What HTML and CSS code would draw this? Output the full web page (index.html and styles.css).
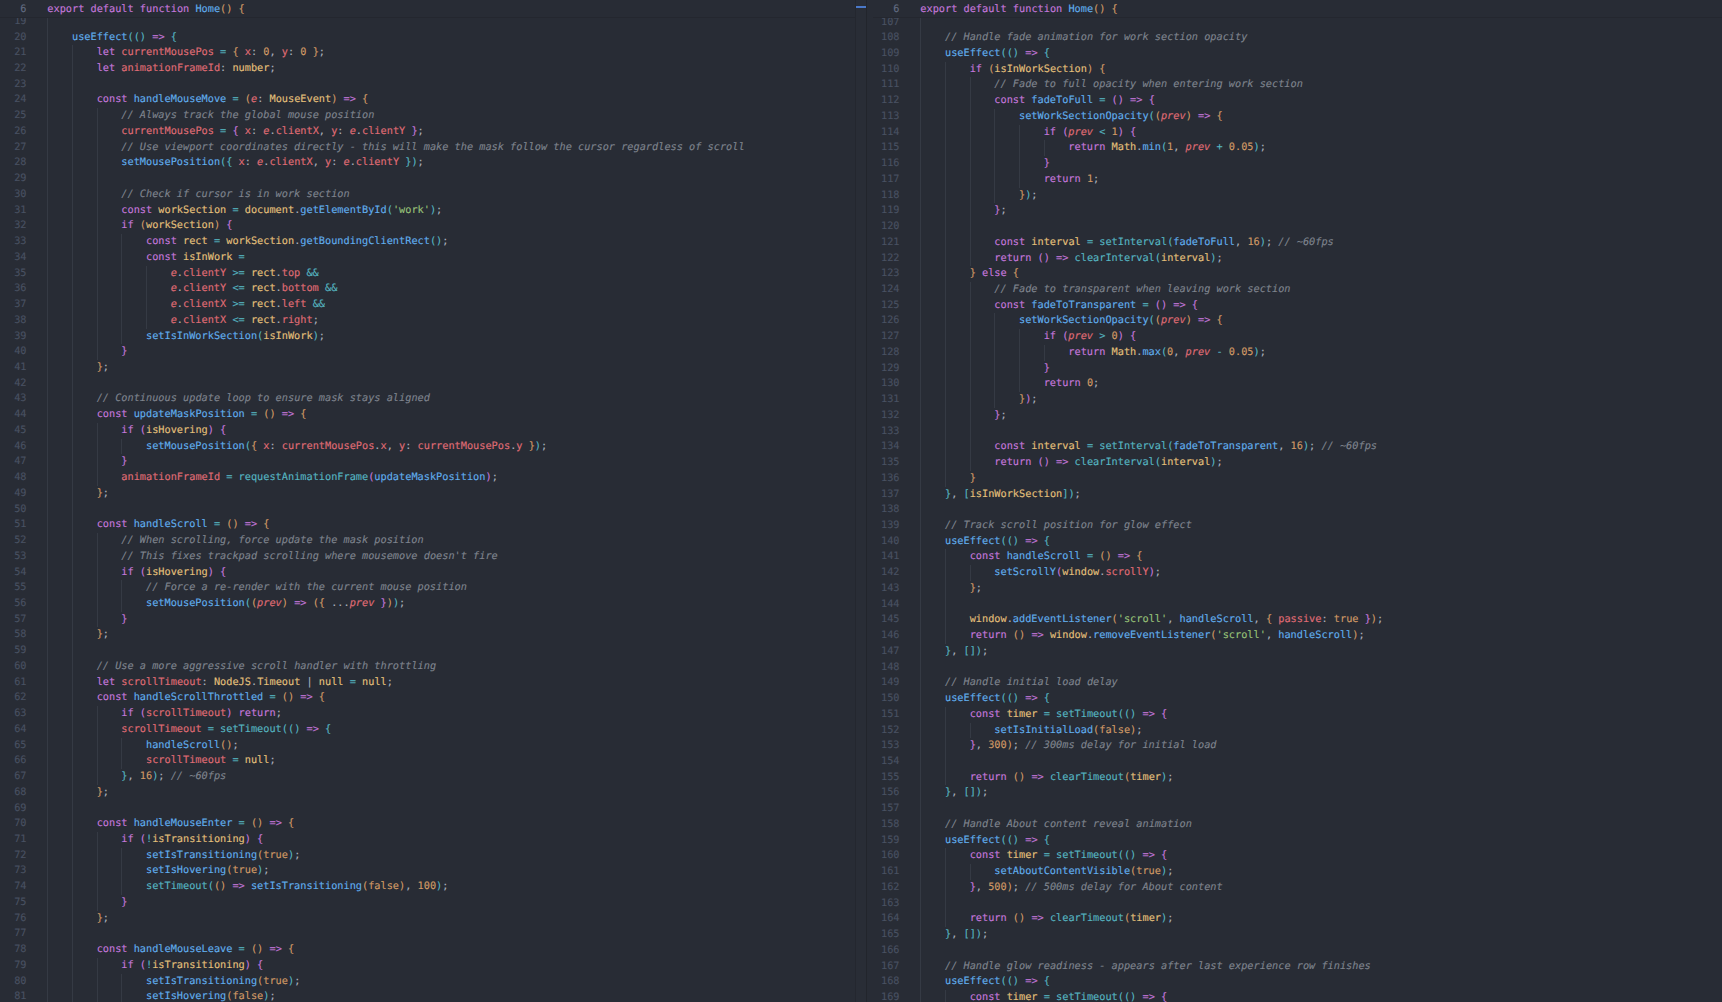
FILE: index.html
```html
<!DOCTYPE html>
<html lang="en">
<head>
<meta charset="utf-8">
<title>page.tsx</title>
<link rel="stylesheet" href="styles.css">
</head>
<body>
<main class="editor">
<section class="pane">
<div class="sticky"><div class="l"><span class="n on">6</span><span class="t"><span class="k">export default function</span> <span class="f">Home</span><span class="O">()</span> <span class="O">{</span></span></div></div>
<div class="scroll"><div class="code left">
<div class="l"><span class="n">19</span><i></i></div>
<div class="l"><span class="n">20</span><i></i><span class="t">    <span class="f">useEffect</span><span class="T">(()</span> <span class="k">=&gt;</span> <span class="T">{</span></span></div>
<div class="l"><span class="n">21</span><i></i><i></i><span class="t">    <span class="k">let</span> <span class="v">currentMousePos</span> <span class="o">=</span> <span class="O">{</span> <span class="v">x</span>: <span class="d">0</span>, <span class="v">y</span>: <span class="d">0</span> <span class="O">}</span>;</span></div>
<div class="l"><span class="n">22</span><i></i><i></i><span class="t">    <span class="k">let</span> <span class="v">animationFrameId</span>: <span class="y">number</span>;</span></div>
<div class="l"><span class="n">23</span><i></i><i></i></div>
<div class="l"><span class="n">24</span><i></i><i></i><span class="t">    <span class="k">const</span> <span class="f">handleMouseMove</span> <span class="o">=</span> <span class="O">(</span><span class="a">e</span>: <span class="y">MouseEvent</span><span class="O">)</span> <span class="k">=&gt;</span> <span class="O">{</span></span></div>
<div class="l"><span class="n">25</span><i></i><i></i><i></i><span class="t">    <span class="c">// Always track the global mouse position</span></span></div>
<div class="l"><span class="n">26</span><i></i><i></i><i></i><span class="t">    <span class="v">currentMousePos</span> <span class="o">=</span> <span class="P">{</span> <span class="v">x</span>: <span class="a">e</span>.<span class="v">clientX</span>, <span class="v">y</span>: <span class="a">e</span>.<span class="v">clientY</span> <span class="P">}</span>;</span></div>
<div class="l"><span class="n">27</span><i></i><i></i><i></i><span class="t">    <span class="c">// Use viewport coordinates directly - this will make the mask follow the cursor regardless of scroll</span></span></div>
<div class="l"><span class="n">28</span><i></i><i></i><i></i><span class="t">    <span class="f">setMousePosition</span><span class="T">({</span> <span class="v">x</span>: <span class="a">e</span>.<span class="v">clientX</span>, <span class="v">y</span>: <span class="a">e</span>.<span class="v">clientY</span> <span class="T">})</span>;</span></div>
<div class="l"><span class="n">29</span><i></i><i></i><i></i></div>
<div class="l"><span class="n">30</span><i></i><i></i><i></i><span class="t">    <span class="c">// Check if cursor is in work section</span></span></div>
<div class="l"><span class="n">31</span><i></i><i></i><i></i><span class="t">    <span class="k">const</span> <span class="y">workSection</span> <span class="o">=</span> <span class="y">document</span>.<span class="f">getElementById</span><span class="T">(</span><span class="s">'work'</span><span class="T">)</span>;</span></div>
<div class="l"><span class="n">32</span><i></i><i></i><i></i><span class="t">    <span class="k">if</span> <span class="O">(</span><span class="y">workSection</span><span class="O">)</span> <span class="P">{</span></span></div>
<div class="l"><span class="n">33</span><i></i><i></i><i></i><i></i><span class="t">    <span class="k">const</span> <span class="y">rect</span> <span class="o">=</span> <span class="y">workSection</span>.<span class="f">getBoundingClientRect</span><span class="T">()</span>;</span></div>
<div class="l"><span class="n">34</span><i></i><i></i><i></i><i></i><span class="t">    <span class="k">const</span> <span class="y">isInWork</span> <span class="o">=</span></span></div>
<div class="l"><span class="n">35</span><i></i><i></i><i></i><i></i><i></i><span class="t">    <span class="a">e</span>.<span class="v">clientY</span> <span class="o">&gt;=</span> <span class="y">rect</span>.<span class="v">top</span> <span class="o">&amp;&amp;</span></span></div>
<div class="l"><span class="n">36</span><i></i><i></i><i></i><i></i><i></i><span class="t">    <span class="a">e</span>.<span class="v">clientY</span> <span class="o">&lt;=</span> <span class="y">rect</span>.<span class="v">bottom</span> <span class="o">&amp;&amp;</span></span></div>
<div class="l"><span class="n">37</span><i></i><i></i><i></i><i></i><i></i><span class="t">    <span class="a">e</span>.<span class="v">clientX</span> <span class="o">&gt;=</span> <span class="y">rect</span>.<span class="v">left</span> <span class="o">&amp;&amp;</span></span></div>
<div class="l"><span class="n">38</span><i></i><i></i><i></i><i></i><i></i><span class="t">    <span class="a">e</span>.<span class="v">clientX</span> <span class="o">&lt;=</span> <span class="y">rect</span>.<span class="v">right</span>;</span></div>
<div class="l"><span class="n">39</span><i></i><i></i><i></i><i></i><span class="t">    <span class="f">setIsInWorkSection</span><span class="T">(</span><span class="y">isInWork</span><span class="T">)</span>;</span></div>
<div class="l"><span class="n">40</span><i></i><i></i><i></i><span class="t">    <span class="P">}</span></span></div>
<div class="l"><span class="n">41</span><i></i><i></i><span class="t">    <span class="O">}</span>;</span></div>
<div class="l"><span class="n">42</span><i></i><i></i></div>
<div class="l"><span class="n">43</span><i></i><i></i><span class="t">    <span class="c">// Continuous update loop to ensure mask stays aligned</span></span></div>
<div class="l"><span class="n">44</span><i></i><i></i><span class="t">    <span class="k">const</span> <span class="f">updateMaskPosition</span> <span class="o">=</span> <span class="O">()</span> <span class="k">=&gt;</span> <span class="O">{</span></span></div>
<div class="l"><span class="n">45</span><i></i><i></i><i></i><span class="t">    <span class="k">if</span> <span class="P">(</span><span class="y">isHovering</span><span class="P">)</span> <span class="P">{</span></span></div>
<div class="l"><span class="n">46</span><i></i><i></i><i></i><i></i><span class="t">    <span class="f">setMousePosition</span><span class="T">(</span><span class="O">{</span> <span class="v">x</span>: <span class="v">currentMousePos</span>.<span class="v">x</span>, <span class="v">y</span>: <span class="v">currentMousePos</span>.<span class="v">y</span> <span class="O">}</span><span class="T">)</span>;</span></div>
<div class="l"><span class="n">47</span><i></i><i></i><i></i><span class="t">    <span class="P">}</span></span></div>
<div class="l"><span class="n">48</span><i></i><i></i><i></i><span class="t">    <span class="v">animationFrameId</span> <span class="o">=</span> <span class="h">requestAnimationFrame</span><span class="P">(</span><span class="f">updateMaskPosition</span><span class="P">)</span>;</span></div>
<div class="l"><span class="n">49</span><i></i><i></i><span class="t">    <span class="O">}</span>;</span></div>
<div class="l"><span class="n">50</span><i></i><i></i></div>
<div class="l"><span class="n">51</span><i></i><i></i><span class="t">    <span class="k">const</span> <span class="f">handleScroll</span> <span class="o">=</span> <span class="O">()</span> <span class="k">=&gt;</span> <span class="O">{</span></span></div>
<div class="l"><span class="n">52</span><i></i><i></i><i></i><span class="t">    <span class="c">// When scrolling, force update the mask position</span></span></div>
<div class="l"><span class="n">53</span><i></i><i></i><i></i><span class="t">    <span class="c">// This fixes trackpad scrolling where mousemove doesn't fire</span></span></div>
<div class="l"><span class="n">54</span><i></i><i></i><i></i><span class="t">    <span class="k">if</span> <span class="P">(</span><span class="y">isHovering</span><span class="P">)</span> <span class="P">{</span></span></div>
<div class="l"><span class="n">55</span><i></i><i></i><i></i><i></i><span class="t">    <span class="c">// Force a re-render with the current mouse position</span></span></div>
<div class="l"><span class="n">56</span><i></i><i></i><i></i><i></i><span class="t">    <span class="f">setMousePosition</span><span class="T">(</span><span class="O">(</span><span class="a">prev</span><span class="O">)</span> <span class="k">=&gt;</span> <span class="O">({</span> ...<span class="a">prev</span> <span class="P">}</span><span class="O">)</span><span class="T">)</span>;</span></div>
<div class="l"><span class="n">57</span><i></i><i></i><i></i><span class="t">    <span class="P">}</span></span></div>
<div class="l"><span class="n">58</span><i></i><i></i><span class="t">    <span class="O">}</span>;</span></div>
<div class="l"><span class="n">59</span><i></i><i></i></div>
<div class="l"><span class="n">60</span><i></i><i></i><span class="t">    <span class="c">// Use a more aggressive scroll handler with throttling</span></span></div>
<div class="l"><span class="n">61</span><i></i><i></i><span class="t">    <span class="k">let</span> <span class="v">scrollTimeout</span>: <span class="y">NodeJS</span>.<span class="y">Timeout</span> | <span class="y">null</span> <span class="o">=</span> <span class="y">null</span>;</span></div>
<div class="l"><span class="n">62</span><i></i><i></i><span class="t">    <span class="k">const</span> <span class="f">handleScrollThrottled</span> <span class="o">=</span> <span class="O">()</span> <span class="k">=&gt;</span> <span class="O">{</span></span></div>
<div class="l"><span class="n">63</span><i></i><i></i><i></i><span class="t">    <span class="k">if</span> <span class="P">(</span><span class="v">scrollTimeout</span><span class="P">)</span> <span class="k">return</span>;</span></div>
<div class="l"><span class="n">64</span><i></i><i></i><i></i><span class="t">    <span class="v">scrollTimeout</span> <span class="o">=</span> <span class="h">setTimeout</span><span class="T">(()</span> <span class="k">=&gt;</span> <span class="T">{</span></span></div>
<div class="l"><span class="n">65</span><i></i><i></i><i></i><i></i><span class="t">    <span class="f">handleScroll</span><span class="O">()</span>;</span></div>
<div class="l"><span class="n">66</span><i></i><i></i><i></i><i></i><span class="t">    <span class="v">scrollTimeout</span> <span class="o">=</span> <span class="y">null</span>;</span></div>
<div class="l"><span class="n">67</span><i></i><i></i><i></i><span class="t">    <span class="T">}</span>, <span class="d">16</span><span class="T">)</span>; <span class="c">// ~60fps</span></span></div>
<div class="l"><span class="n">68</span><i></i><i></i><span class="t">    <span class="O">}</span>;</span></div>
<div class="l"><span class="n">69</span><i></i><i></i></div>
<div class="l"><span class="n">70</span><i></i><i></i><span class="t">    <span class="k">const</span> <span class="f">handleMouseEnter</span> <span class="o">=</span> <span class="O">()</span> <span class="k">=&gt;</span> <span class="O">{</span></span></div>
<div class="l"><span class="n">71</span><i></i><i></i><i></i><span class="t">    <span class="k">if</span> <span class="P">(</span><span class="o">!</span><span class="y">isTransitioning</span><span class="P">)</span> <span class="P">{</span></span></div>
<div class="l"><span class="n">72</span><i></i><i></i><i></i><i></i><span class="t">    <span class="f">setIsTransitioning</span><span class="O">(</span><span class="d">true</span><span class="T">)</span>;</span></div>
<div class="l"><span class="n">73</span><i></i><i></i><i></i><i></i><span class="t">    <span class="f">setIsHovering</span><span class="O">(</span><span class="d">true</span><span class="T">)</span>;</span></div>
<div class="l"><span class="n">74</span><i></i><i></i><i></i><i></i><span class="t">    <span class="h">setTimeout</span><span class="T">(</span><span class="O">()</span> <span class="k">=&gt;</span> <span class="f">setIsTransitioning</span><span class="O">(</span><span class="d">false</span><span class="O">)</span>, <span class="d">100</span><span class="T">)</span>;</span></div>
<div class="l"><span class="n">75</span><i></i><i></i><i></i><span class="t">    <span class="P">}</span></span></div>
<div class="l"><span class="n">76</span><i></i><i></i><span class="t">    <span class="O">}</span>;</span></div>
<div class="l"><span class="n">77</span><i></i><i></i></div>
<div class="l"><span class="n">78</span><i></i><i></i><span class="t">    <span class="k">const</span> <span class="f">handleMouseLeave</span> <span class="o">=</span> <span class="O">()</span> <span class="k">=&gt;</span> <span class="O">{</span></span></div>
<div class="l"><span class="n">79</span><i></i><i></i><i></i><span class="t">    <span class="k">if</span> <span class="P">(</span><span class="o">!</span><span class="y">isTransitioning</span><span class="P">)</span> <span class="P">{</span></span></div>
<div class="l"><span class="n">80</span><i></i><i></i><i></i><i></i><span class="t">    <span class="f">setIsTransitioning</span><span class="O">(</span><span class="d">true</span><span class="T">)</span>;</span></div>
<div class="l"><span class="n">81</span><i></i><i></i><i></i><i></i><span class="t">    <span class="f">setIsHovering</span><span class="O">(</span><span class="d">false</span><span class="T">)</span>;</span></div>
</div></div>
</section>
<aside class="rail"><div class="mark"></div></aside>
<section class="pane second">
<div class="sticky"><div class="l"><span class="n on">6</span><span class="t"><span class="k">export default function</span> <span class="f">Home</span><span class="O">()</span> <span class="O">{</span></span></div></div>
<div class="scroll"><div class="code right">
<div class="l"><span class="n">107</span><i></i></div>
<div class="l"><span class="n">108</span><i></i><span class="t">    <span class="c">// Handle fade animation for work section opacity</span></span></div>
<div class="l"><span class="n">109</span><i></i><span class="t">    <span class="f">useEffect</span><span class="T">(()</span> <span class="k">=&gt;</span> <span class="T">{</span></span></div>
<div class="l"><span class="n">110</span><i></i><i></i><span class="t">    <span class="k">if</span> <span class="O">(</span><span class="y">isInWorkSection</span><span class="O">)</span> <span class="O">{</span></span></div>
<div class="l"><span class="n">111</span><i></i><i></i><i></i><span class="t">    <span class="c">// Fade to full opacity when entering work section</span></span></div>
<div class="l"><span class="n">112</span><i></i><i></i><i></i><span class="t">    <span class="k">const</span> <span class="f">fadeToFull</span> <span class="o">=</span> <span class="P">()</span> <span class="k">=&gt;</span> <span class="P">{</span></span></div>
<div class="l"><span class="n">113</span><i></i><i></i><i></i><i></i><span class="t">    <span class="f">setWorkSectionOpacity</span><span class="T">(</span><span class="O">(</span><span class="a">prev</span><span class="O">)</span> <span class="k">=&gt;</span> <span class="O">{</span></span></div>
<div class="l"><span class="n">114</span><i></i><i></i><i></i><i></i><i></i><span class="t">    <span class="k">if</span> <span class="P">(</span><span class="a">prev</span> <span class="o">&lt;</span> <span class="d">1</span><span class="P">)</span> <span class="P">{</span></span></div>
<div class="l"><span class="n">115</span><i></i><i></i><i></i><i></i><i></i><i></i><span class="t">    <span class="k">return</span> <span class="y">Math</span>.<span class="f">min</span><span class="T">(</span><span class="d">1</span>, <span class="a">prev</span> <span class="o">+</span> <span class="d">0.05</span><span class="T">)</span>;</span></div>
<div class="l"><span class="n">116</span><i></i><i></i><i></i><i></i><i></i><span class="t">    <span class="P">}</span></span></div>
<div class="l"><span class="n">117</span><i></i><i></i><i></i><i></i><i></i><span class="t">    <span class="k">return</span> <span class="d">1</span>;</span></div>
<div class="l"><span class="n">118</span><i></i><i></i><i></i><i></i><span class="t">    <span class="O">}</span><span class="T">)</span>;</span></div>
<div class="l"><span class="n">119</span><i></i><i></i><i></i><span class="t">    <span class="P">}</span>;</span></div>
<div class="l"><span class="n">120</span><i></i><i></i><i></i></div>
<div class="l"><span class="n">121</span><i></i><i></i><i></i><span class="t">    <span class="k">const</span> <span class="y">interval</span> <span class="o">=</span> <span class="h">setInterval</span><span class="T">(</span><span class="f">fadeToFull</span>, <span class="d">16</span><span class="T">)</span>; <span class="c">// ~60fps</span></span></div>
<div class="l"><span class="n">122</span><i></i><i></i><i></i><span class="t">    <span class="k">return</span> <span class="P">()</span> <span class="k">=&gt;</span> <span class="h">clearInterval</span><span class="T">(</span><span class="y">interval</span><span class="T">)</span>;</span></div>
<div class="l"><span class="n">123</span><i></i><i></i><span class="t">    <span class="O">}</span> <span class="k">else</span> <span class="O">{</span></span></div>
<div class="l"><span class="n">124</span><i></i><i></i><i></i><span class="t">    <span class="c">// Fade to transparent when leaving work section</span></span></div>
<div class="l"><span class="n">125</span><i></i><i></i><i></i><span class="t">    <span class="k">const</span> <span class="f">fadeToTransparent</span> <span class="o">=</span> <span class="P">()</span> <span class="k">=&gt;</span> <span class="P">{</span></span></div>
<div class="l"><span class="n">126</span><i></i><i></i><i></i><i></i><span class="t">    <span class="f">setWorkSectionOpacity</span><span class="T">(</span><span class="O">(</span><span class="a">prev</span><span class="O">)</span> <span class="k">=&gt;</span> <span class="O">{</span></span></div>
<div class="l"><span class="n">127</span><i></i><i></i><i></i><i></i><i></i><span class="t">    <span class="k">if</span> <span class="P">(</span><span class="a">prev</span> <span class="o">&gt;</span> <span class="d">0</span><span class="P">)</span> <span class="P">{</span></span></div>
<div class="l"><span class="n">128</span><i></i><i></i><i></i><i></i><i></i><i></i><span class="t">    <span class="k">return</span> <span class="y">Math</span>.<span class="f">max</span><span class="T">(</span><span class="d">0</span>, <span class="a">prev</span> <span class="o">-</span> <span class="d">0.05</span><span class="T">)</span>;</span></div>
<div class="l"><span class="n">129</span><i></i><i></i><i></i><i></i><i></i><span class="t">    <span class="P">}</span></span></div>
<div class="l"><span class="n">130</span><i></i><i></i><i></i><i></i><i></i><span class="t">    <span class="k">return</span> <span class="d">0</span>;</span></div>
<div class="l"><span class="n">131</span><i></i><i></i><i></i><i></i><span class="t">    <span class="O">}</span><span class="P">)</span>;</span></div>
<div class="l"><span class="n">132</span><i></i><i></i><i></i><span class="t">    <span class="P">}</span>;</span></div>
<div class="l"><span class="n">133</span><i></i><i></i><i></i></div>
<div class="l"><span class="n">134</span><i></i><i></i><i></i><span class="t">    <span class="k">const</span> <span class="y">interval</span> <span class="o">=</span> <span class="h">setInterval</span><span class="T">(</span><span class="f">fadeToTransparent</span>, <span class="d">16</span><span class="T">)</span>; <span class="c">// ~60fps</span></span></div>
<div class="l"><span class="n">135</span><i></i><i></i><i></i><span class="t">    <span class="k">return</span> <span class="P">()</span> <span class="k">=&gt;</span> <span class="h">clearInterval</span><span class="T">(</span><span class="y">interval</span><span class="T">)</span>;</span></div>
<div class="l"><span class="n">136</span><i></i><i></i><span class="t">    <span class="O">}</span></span></div>
<div class="l"><span class="n">137</span><i></i><span class="t">    <span class="T">}</span>, <span class="T">[</span><span class="y">isInWorkSection</span><span class="T">])</span>;</span></div>
<div class="l"><span class="n">138</span><i></i></div>
<div class="l"><span class="n">139</span><i></i><span class="t">    <span class="c">// Track scroll position for glow effect</span></span></div>
<div class="l"><span class="n">140</span><i></i><span class="t">    <span class="f">useEffect</span><span class="T">(()</span> <span class="k">=&gt;</span> <span class="T">{</span></span></div>
<div class="l"><span class="n">141</span><i></i><i></i><span class="t">    <span class="k">const</span> <span class="f">handleScroll</span> <span class="o">=</span> <span class="O">()</span> <span class="k">=&gt;</span> <span class="O">{</span></span></div>
<div class="l"><span class="n">142</span><i></i><i></i><i></i><span class="t">    <span class="f">setScrollY</span><span class="P">(</span><span class="y">window</span>.<span class="v">scrollY</span><span class="P">)</span>;</span></div>
<div class="l"><span class="n">143</span><i></i><i></i><span class="t">    <span class="O">}</span>;</span></div>
<div class="l"><span class="n">144</span><i></i><i></i></div>
<div class="l"><span class="n">145</span><i></i><i></i><span class="t">    <span class="y">window</span>.<span class="f">addEventListener</span><span class="O">(</span><span class="s">'scroll'</span>, <span class="f">handleScroll</span>, <span class="O">{</span> <span class="v">passive</span>: <span class="d">true</span> <span class="P">}</span><span class="O">)</span>;</span></div>
<div class="l"><span class="n">146</span><i></i><i></i><span class="t">    <span class="k">return</span> <span class="O">()</span> <span class="k">=&gt;</span> <span class="y">window</span>.<span class="f">removeEventListener</span><span class="O">(</span><span class="s">'scroll'</span>, <span class="f">handleScroll</span><span class="O">)</span>;</span></div>
<div class="l"><span class="n">147</span><i></i><span class="t">    <span class="T">}</span>, <span class="T">[])</span>;</span></div>
<div class="l"><span class="n">148</span><i></i></div>
<div class="l"><span class="n">149</span><i></i><span class="t">    <span class="c">// Handle initial load delay</span></span></div>
<div class="l"><span class="n">150</span><i></i><span class="t">    <span class="f">useEffect</span><span class="T">(()</span> <span class="k">=&gt;</span> <span class="T">{</span></span></div>
<div class="l"><span class="n">151</span><i></i><i></i><span class="t">    <span class="k">const</span> <span class="y">timer</span> <span class="o">=</span> <span class="h">setTimeout</span><span class="T">(()</span> <span class="k">=&gt;</span> <span class="P">{</span></span></div>
<div class="l"><span class="n">152</span><i></i><i></i><i></i><span class="t">    <span class="f">setIsInitialLoad</span><span class="O">(</span><span class="d">false</span><span class="O">)</span>;</span></div>
<div class="l"><span class="n">153</span><i></i><i></i><span class="t">    <span class="P">}</span>, <span class="d">300</span><span class="O">)</span>; <span class="c">// 300ms delay for initial load</span></span></div>
<div class="l"><span class="n">154</span><i></i><i></i></div>
<div class="l"><span class="n">155</span><i></i><i></i><span class="t">    <span class="k">return</span> <span class="O">()</span> <span class="k">=&gt;</span> <span class="h">clearTimeout</span><span class="O">(</span><span class="y">timer</span><span class="T">)</span>;</span></div>
<div class="l"><span class="n">156</span><i></i><span class="t">    <span class="T">}</span>, <span class="T">[])</span>;</span></div>
<div class="l"><span class="n">157</span><i></i></div>
<div class="l"><span class="n">158</span><i></i><span class="t">    <span class="c">// Handle About content reveal animation</span></span></div>
<div class="l"><span class="n">159</span><i></i><span class="t">    <span class="f">useEffect</span><span class="T">(()</span> <span class="k">=&gt;</span> <span class="T">{</span></span></div>
<div class="l"><span class="n">160</span><i></i><i></i><span class="t">    <span class="k">const</span> <span class="y">timer</span> <span class="o">=</span> <span class="h">setTimeout</span><span class="T">(()</span> <span class="k">=&gt;</span> <span class="P">{</span></span></div>
<div class="l"><span class="n">161</span><i></i><i></i><i></i><span class="t">    <span class="f">setAboutContentVisible</span><span class="O">(</span><span class="d">true</span><span class="T">)</span>;</span></div>
<div class="l"><span class="n">162</span><i></i><i></i><span class="t">    <span class="P">}</span>, <span class="d">500</span><span class="O">)</span>; <span class="c">// 500ms delay for About content</span></span></div>
<div class="l"><span class="n">163</span><i></i><i></i></div>
<div class="l"><span class="n">164</span><i></i><i></i><span class="t">    <span class="k">return</span> <span class="O">()</span> <span class="k">=&gt;</span> <span class="h">clearTimeout</span><span class="O">(</span><span class="y">timer</span><span class="T">)</span>;</span></div>
<div class="l"><span class="n">165</span><i></i><span class="t">    <span class="T">}</span>, <span class="T">[])</span>;</span></div>
<div class="l"><span class="n">166</span><i></i></div>
<div class="l"><span class="n">167</span><i></i><span class="t">    <span class="c">// Handle glow readiness - appears after last experience row finishes</span></span></div>
<div class="l"><span class="n">168</span><i></i><span class="t">    <span class="f">useEffect</span><span class="T">(()</span> <span class="k">=&gt;</span> <span class="T">{</span></span></div>
<div class="l"><span class="n">169</span><i></i><i></i><span class="t">    <span class="k">const</span> <span class="y">timer</span> <span class="o">=</span> <span class="h">setTimeout</span><span class="T">(()</span> <span class="k">=&gt;</span> <span class="P">{</span></span></div>
</div></div>
</section>
</main>
</body>
</html>
```

FILE: styles.css
```css
html, body {
  margin: 0;
  height: 100%;
  overflow: hidden;
  background: #282c35;
}

.editor {
  display: flex;
  height: 100vh;
  color: #abb2bf;
  font-family: "DejaVu Sans Mono", "Liberation Mono", monospace;
  font-size: 10.25px;
  text-rendering: geometricPrecision;
  -webkit-text-stroke: 0.12px;
}

.pane {
  display: flex;
  flex-direction: column;
  min-width: 0;
  overflow: hidden;
}

.pane:first-child {
  flex: 0 0 855px;
}

.second {
  flex: 1;
  padding-left: 6px;
  border-left: 1px solid #22252c;
}

.sticky {
  position: relative;
  z-index: 1;
  flex: none;
  height: 17px;
  padding-top: 2.2px;
  box-sizing: border-box;
  box-shadow: 0 1px 0 #24272f;
}

.scroll {
  flex: 1;
  min-height: 0;
  overflow: hidden;
}

.left {
  margin-top: -3.2px;
}

.right {
  margin-top: -2.5px;
}

.rail {
  flex: 0 0 11px;
  box-sizing: border-box;
  padding-top: 6px;
  border-left: 1px solid #24272f;
  background: #292d36;
}

.mark {
  height: 2px;
  background: #4a78c8;
}

.l {
  display: flex;
  height: 15.74px;
  line-height: 15.74px;
  white-space: pre;
}

.n {
  flex: none;
  width: 26.5px;
  margin-right: 20.8px;
  text-align: right;
  color: #495162;
}

.n.on {
  color: #636d83;
}

.l i {
  flex: none;
  box-sizing: border-box;
  width: 4ch;
  border-left: 1px solid #353a44;
}

.l i + .t {
  margin-left: -4ch;
}

.t { white-space: pre; }
.k { color: #c678dd; }
.f { color: #61afef; }
.h { color: #56b6c2; }
.v { color: #e06c75; }
.a { color: #e06c75; font-style: italic; }
.y { color: #e5c07b; }
.d { color: #d19a66; }
.s { color: #98c379; }
.o { color: #56b6c2; }
.c { color: #7f848e; font-style: italic; }
.O { color: #d19a66; }
.P { color: #c678dd; }
.T { color: #56b6c2; }
```
